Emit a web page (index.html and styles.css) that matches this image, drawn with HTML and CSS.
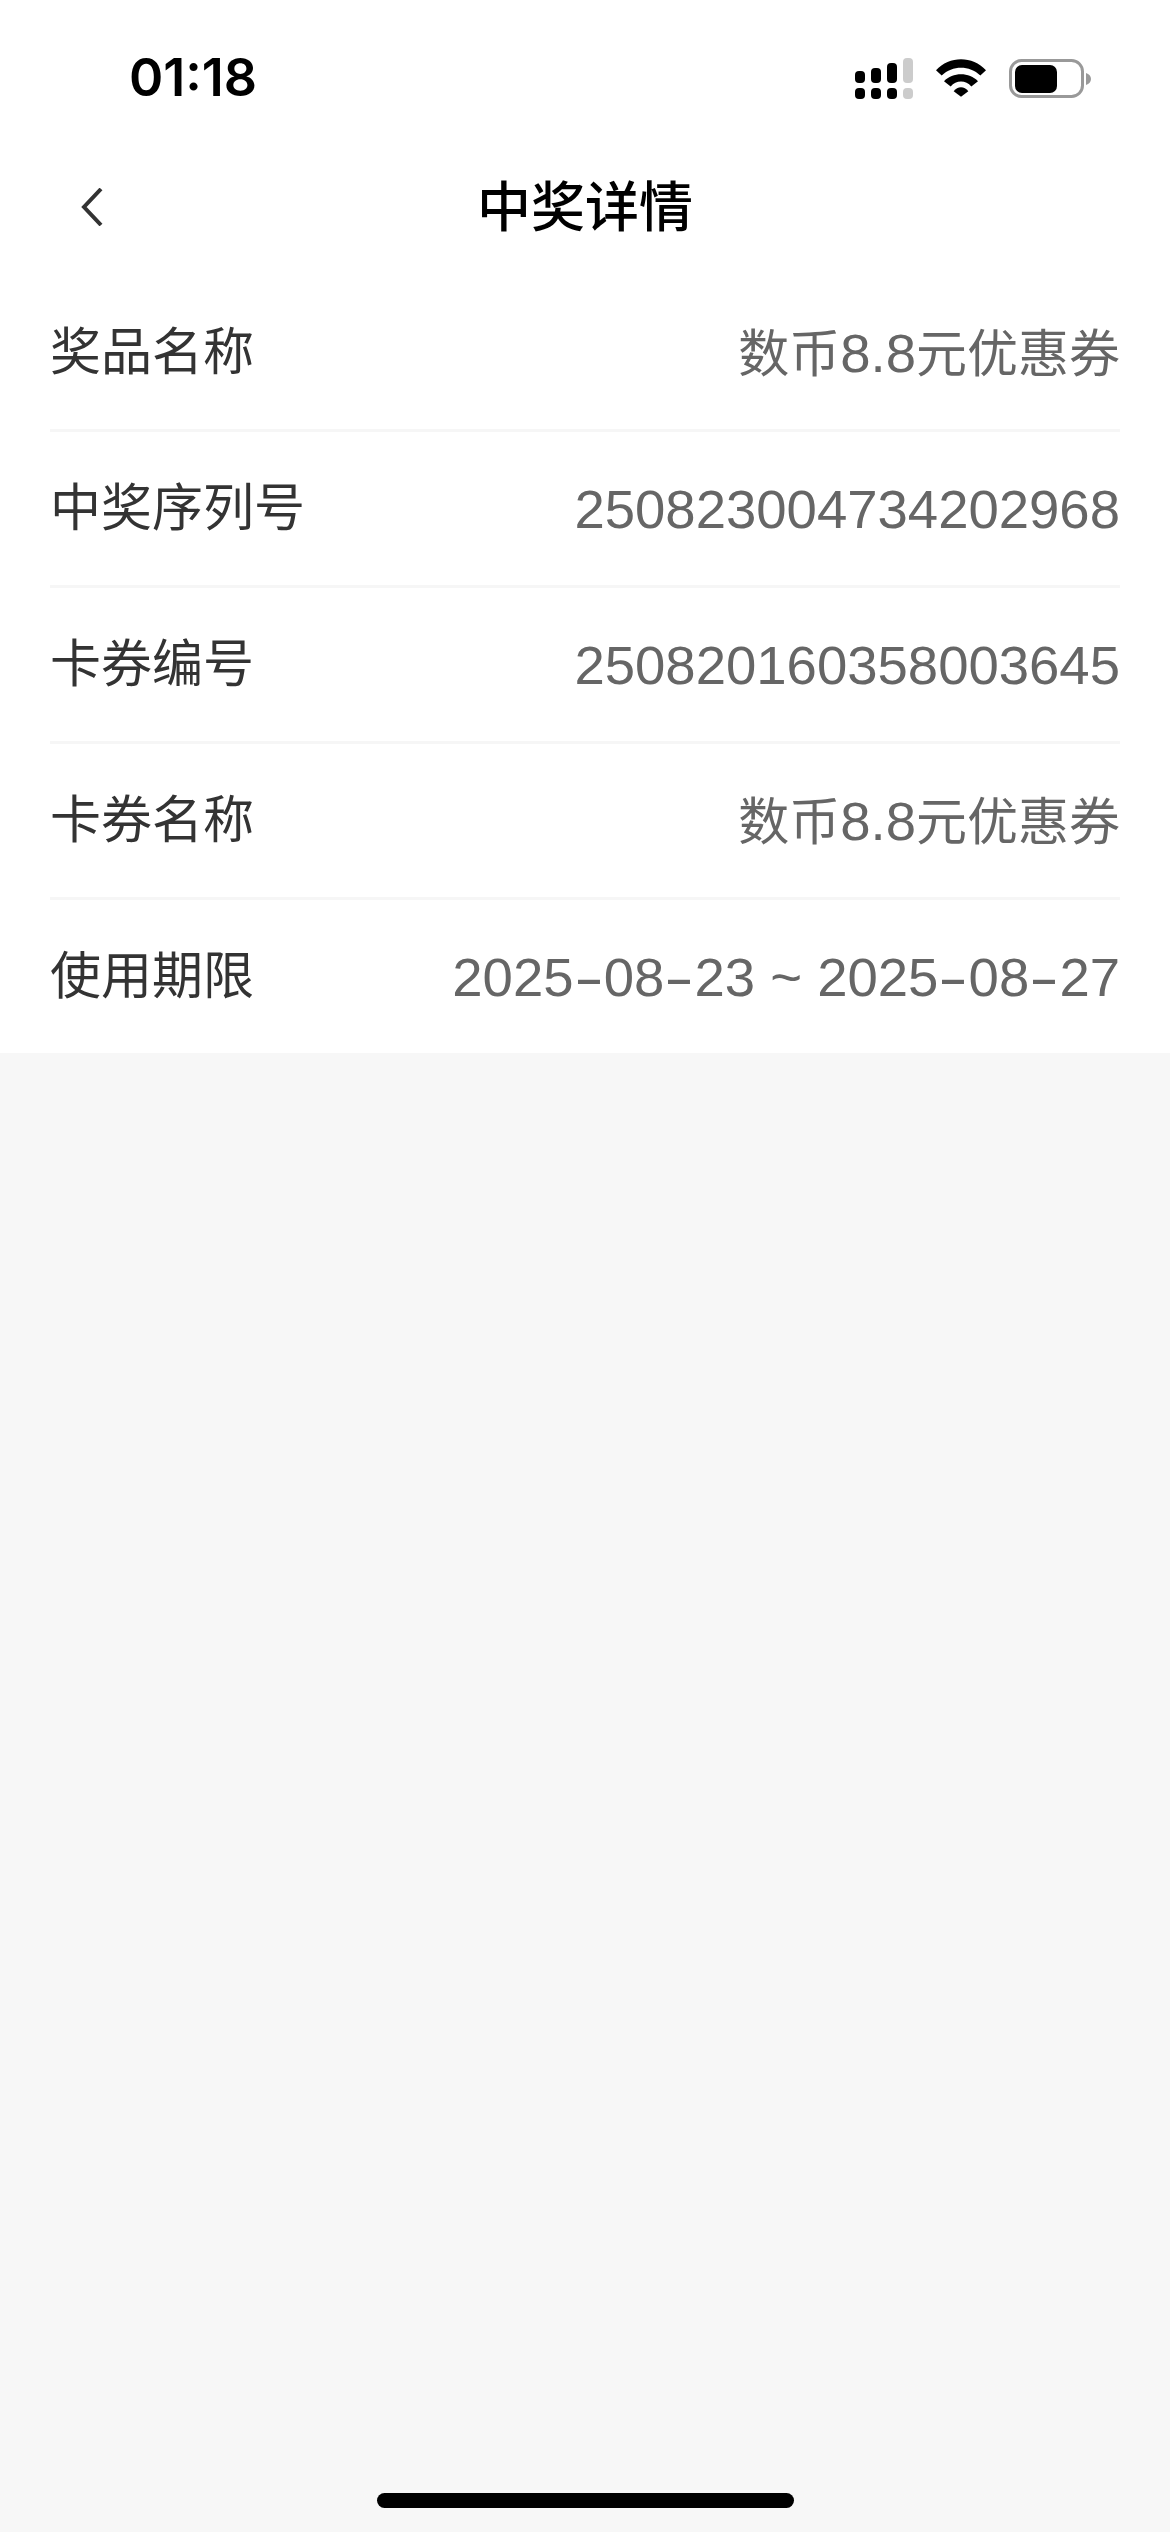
FILE: index.html
```html
<!DOCTYPE html>
<html lang="zh-CN">
<head>
    <meta charset="UTF-8">
    <meta name="viewport" content="width=device-width, initial-scale=1.0">
    <title>中奖详情</title>
    <link rel="stylesheet" href="styles.css">
</head>
<body>
    <div class="page">
        <div class="top-area">
            <div class="status-bar">
                <div class="time">01:18</div>
                <div class="status-icons">
                    <svg class="signal" width="58" height="41" viewBox="0 0 58 41">
                        <rect x="0" y="13" width="10" height="12" rx="4" fill="#000"/>
                        <rect x="16" y="10" width="10" height="15" rx="4" fill="#000"/>
                        <rect x="32" y="5" width="10" height="20" rx="4" fill="#000"/>
                        <rect x="48" y="0" width="10" height="25" rx="4" fill="#ccc"/>
                        <rect x="0" y="30" width="10" height="11" rx="4" fill="#000"/>
                        <rect x="16" y="30" width="10" height="11" rx="4" fill="#000"/>
                        <rect x="32" y="30" width="10" height="11" rx="4" fill="#000"/>
                        <rect x="48" y="30" width="10" height="11" rx="4" fill="#ccc"/>
                    </svg>
                    <svg class="wifi" width="50" height="38" viewBox="0 0 150 113">
                        <path d="M0 33C40 -11 110 -11 150 33L133 49C100 18 50 18 17 49Z" fill="#000"/>
                        <path d="M24 66C50 38 100 38 126 66L106 82C90 62 60 62 44 82Z" fill="#000"/>
                        <path d="M53 96C65 80 85 80 97 96L75 113Z" fill="#000"/>
                    </svg>
                    <svg class="battery" width="82" height="39" viewBox="0 0 82 39">
                        <rect x="1.5" y="1.5" width="72" height="36" rx="11" fill="none" stroke="#999" stroke-width="3"/>
                        <rect x="6" y="6" width="42" height="28" rx="7" fill="#000"/>
                        <path d="M77 14C80 15 82 17 82 20C82 23 80 25 77 26Z" fill="#999"/>
                    </svg>
                </div>
            </div>
            <header class="nav-bar">
                <svg class="back-icon" width="22" height="38" viewBox="0 0 22 38">
                    <path d="M20 1L3 19L20 37" fill="none" stroke="#333" stroke-width="4"/>
                </svg>
                <h1>中奖详情</h1>
            </header>
        </div>

        <div class="info-list">
            <div class="info-row">
                <span class="info-label">奖品名称</span>
                <span class="info-value">数币<span class="num">8.8</span>元优惠券</span>
            </div>
            <div class="info-row">
                <span class="info-label">中奖序列号</span>
                <span class="info-value num">250823004734202968</span>
            </div>
            <div class="info-row">
                <span class="info-label">卡券编号</span>
                <span class="info-value num">250820160358003645</span>
            </div>
            <div class="info-row">
                <span class="info-label">卡券名称</span>
                <span class="info-value">数币<span class="num">8.8</span>元优惠券</span>
            </div>
            <div class="info-row">
                <span class="info-label">使用期限</span>
                <span class="info-value num">2025<span class="dash">-</span>08<span class="dash">-</span>23 ~ 2025<span class="dash">-</span>08<span class="dash">-</span>27</span>
            </div>
        </div>

        <div class="home-indicator"></div>
    </div>
</body>
</html>
```

FILE: styles.css
```css
body {
    margin: 0;
    padding: 0;
    background-color: #f7f7f7;
    font-family: Inter, "Noto Sans CJK SC", sans-serif;
}

.page {
    display: flex;
    flex-direction: column;
    min-height: 2532px;
    box-sizing: border-box;
}

.top-area {
    background-color: #fff;
}

.status-bar {
    display: flex;
    justify-content: space-between;
    align-items: center;
    box-sizing: border-box;
    height: 138px;
    padding: 18px 79px 0 129px;
}

.time {
    font-size: 52px;
    font-weight: 600;
    line-height: 60px;
    color: #000;
}

.status-icons {
    display: flex;
    align-items: center;
    gap: 23px;
}

.status-icons svg {
    display: block;
}

.nav-bar {
    display: flex;
    align-items: center;
    justify-content: center;
    position: relative;
    height: 138px;
}

.back-icon {
    position: absolute;
    left: 81px;
    top: 50px;
}

.nav-bar h1 {
    margin: 0 0 8px;
    font-size: 54px;
    font-weight: 500;
    color: #000;
}

.info-list {
    background-color: #fff;
    padding: 0 50px;
}

.info-row {
    display: flex;
    justify-content: space-between;
    align-items: center;
    height: 153px;
    border-bottom: 3px solid #f6f6f6;
}

.info-row:last-child {
    border-bottom: none;
}

.info-label {
    font-size: 51px;
    line-height: 60px;
    margin-bottom: 2px;
    color: #333;
}

.info-value {
    font-size: 51px;
    line-height: 60px;
    margin-top: 3px;
    color: #666;
}

.num {
    font-family: "Liberation Sans", sans-serif;
    font-size: 54.5px;
}

/* the hyphens in the date are much wider in the original font */
.dash {
    display: inline-block;
    padding: 0 6px;
    transform: scaleX(1.65);
}

.home-indicator {
    width: 417px;
    height: 15px;
    margin: auto auto 24px;
    background-color: #000;
    border-radius: 8px;
}
```
